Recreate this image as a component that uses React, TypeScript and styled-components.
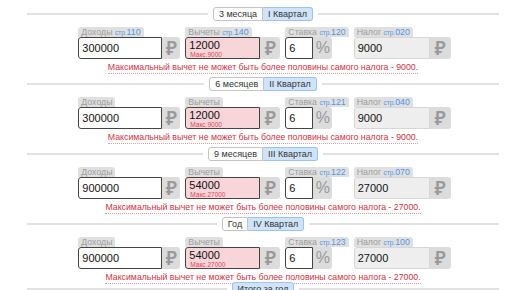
import React from 'react';
import styled, { createGlobalStyle } from 'styled-components';

const GlobalStyle = createGlobalStyle`
  html, body {
    margin: 0;
    padding: 0;
    background: #ffffff;
    font-family: "Liberation Sans", Arial, sans-serif;
  }
`;

interface FieldData {
  value?: string;
  code?: string;
}

interface SectionData {
  period: string;
  quarter: string;
  income: FieldData;
  deduction: FieldData & { max: string };
  rate: FieldData;
  tax: FieldData;
}

const sections: SectionData[] = [
  {
    period: '3 месяца',
    quarter: 'I Квартал',
    income: { value: '300000', code: '110' },
    deduction: { value: '12000', code: '140', max: '9000' },
    rate: { value: '6', code: '120' },
    tax: { value: '9000', code: '020' },
  },
  {
    period: '6 месяцев',
    quarter: 'II Квартал',
    income: { value: '300000' },
    deduction: { value: '12000', max: '9000' },
    rate: { value: '6', code: '121' },
    tax: { value: '9000', code: '040' },
  },
  {
    period: '9 месяцев',
    quarter: 'III Квартал',
    income: { value: '900000' },
    deduction: { value: '54000', max: '27000' },
    rate: { value: '6', code: '122' },
    tax: { value: '27000', code: '070' },
  },
  {
    period: 'Год',
    quarter: 'IV Квартал',
    income: { value: '900000' },
    deduction: { value: '54000', max: '27000' },
    rate: { value: '6', code: '123' },
    tax: { value: '27000', code: '100' },
  },
];

const StyledPage = styled.div`
  padding: 7px 12px 0 22px;
  width: 482px;
`;

const StyledSection = styled.section`
  display: flex;
  flex-direction: column;
  align-items: center;
  margin-bottom: 3px;

  &:nth-of-type(4) {
    margin-bottom: -2px;
  }
`;

const StyledHeader = styled.div`
  display: flex;
  align-items: center;
  width: 100%;
  height: 14px;
  margin-bottom: 6px;
`;

const StyledLine = styled.div`
  flex: 1;
  height: 2px;
  background: #e2e2e2;
  margin: 0 5px;
`;

const StyledTabs = styled.div`
  display: flex;
`;

const StyledTab = styled.div<{ $active?: boolean }>`
  height: 14px;
  box-sizing: border-box;
  padding: 0 5px;
  display: flex;
  align-items: center;
  font-size: 9px;
  color: #333;
  background: ${(p) => (p.$active ? '#cfe3fa' : '#ffffff')};
  border: 1px solid ${(p) => (p.$active ? '#9cc3ee' : '#c4c4c4')};
  &:first-child {
    border-radius: 3px 0 0 3px;
  }
  &:last-child {
    border-radius: 0 3px 3px 0;
  }
  &:only-child {
    border-radius: 3px;
  }
  & + & {
    border-left: none;
  }
`;

const StyledRow = styled.div`
  display: flex;
  gap: 5px;
  margin-left: 3px;
`;

const StyledField = styled.div`
  display: flex;
  flex-direction: column;
  align-items: flex-start;
`;

const StyledLabel = styled.div`
  height: 10px;
  box-sizing: border-box;
  padding: 0 3px;
  background: #e0e0e0;
  border-radius: 3px 3px 0 0;
  font-size: 8.75px;
  line-height: 10px;
  color: #9c9c9c;
  white-space: nowrap;

  small {
    font-size: 6.5px;
    color: #4f95e6;
  }
  b {
    font-weight: normal;
    color: #4f95e6;
  }
`;

const StyledGroup = styled.div`
  display: flex;
  height: 22px;
`;

const StyledInput = styled.div<{ $w: number; $variant?: 'error' | 'readonly' }>`
  position: relative;
  width: ${(p) => p.$w}px;
  height: 22px;
  box-sizing: border-box;
  padding: ${(p) => (p.$variant === 'error' ? '1px 3px 0' : '0 3px')};
  display: flex;
  align-items: ${(p) => (p.$variant === 'error' ? 'flex-start' : 'center')};
  font-size: 11px;
  line-height: 13px;
  color: #111;
  border-radius: 3px 0 0 3px;
  background: ${(p) =>
    p.$variant === 'error' ? '#f7d5d9' : p.$variant === 'readonly' ? '#eeeeee' : '#ffffff'};
  border: 1.5px solid ${(p) => (p.$variant === 'readonly' ? '#d6d6d6' : '#444')};
`;

const StyledMax = styled.span`
  position: absolute;
  left: 4px;
  bottom: 0px;
  font-size: 6.5px;
  line-height: 7px;
  color: #e0475a;
`;

const StyledAddon = styled.div<{ $w: number }>`
  width: ${(p) => p.$w}px;
  height: 22px;
  display: flex;
  align-items: center;
  justify-content: center;
  background: #dcdcdc;
  border-radius: 0 3px 3px 0;
  color: #999;
  font-family: "Noto Sans", Roboto, Inter, sans-serif;
  font-weight: 600;
  font-size: 19px;
  line-height: 1;
`;

const StyledPercent = styled(StyledAddon)`
  font-family: "Liberation Sans", Arial, sans-serif;
  font-weight: normal;
  font-size: 16px;
`;

const StyledError = styled.div`
  margin-top: 3px;
  height: 11px;
  font-size: 8.75px;
  line-height: 10px;
  color: #cc3344;
  border-bottom: 1px dotted #d9a0a8;
`;

const Label = ({ title, code }: { title: string; code?: string }) => (
  <StyledLabel>
    {title}
    {code && (
      <>
        {' '}
        <small>стр.</small>
        <b>{code}</b>
      </>
    )}
  </StyledLabel>
);

const Section = ({ data }: { data: SectionData }) => (
  <StyledSection>
    <StyledHeader>
      <StyledLine />
      <StyledTabs>
        <StyledTab>{data.period}</StyledTab>
        <StyledTab $active>{data.quarter}</StyledTab>
      </StyledTabs>
      <StyledLine />
    </StyledHeader>
    <StyledRow>
      <StyledField>
        <Label title="Доходы" code={data.income.code} />
        <StyledGroup>
          <StyledInput $w={84}>{data.income.value}</StyledInput>
          <StyledAddon $w={18}>₽</StyledAddon>
        </StyledGroup>
      </StyledField>
      <StyledField>
        <Label title="Вычеты" code={data.deduction.code} />
        <StyledGroup>
          <StyledInput $w={75} $variant="error">
            {data.deduction.value}
            <StyledMax>Макс.{data.deduction.max}</StyledMax>
          </StyledInput>
          <StyledAddon $w={20}>₽</StyledAddon>
        </StyledGroup>
      </StyledField>
      <StyledField>
        <Label title="Ставка" code={data.rate.code} />
        <StyledGroup>
          <StyledInput $w={28}>{data.rate.value}</StyledInput>
          <StyledPercent $w={19}>%</StyledPercent>
        </StyledGroup>
      </StyledField>
      <StyledField>
        <Label title="Налог" code={data.tax.code} />
        <StyledGroup>
          <StyledInput $w={76} $variant="readonly">
            {data.tax.value}
          </StyledInput>
          <StyledAddon $w={21}>₽</StyledAddon>
        </StyledGroup>
      </StyledField>
    </StyledRow>
    <StyledError>
      Максимальный вычет не может быть более половины самого налога - {data.deduction.max}.
    </StyledError>
  </StyledSection>
);

const App = () => {
  return (
    <>
      <GlobalStyle />
      <StyledPage>
        {sections.map((s) => (
          <Section key={s.quarter} data={s} />
        ))}
        <StyledHeader>
          <StyledLine />
          <StyledTabs>
            <StyledTab $active>Итого за год</StyledTab>
          </StyledTabs>
          <StyledLine />
        </StyledHeader>
      </StyledPage>
    </>
  );
};

export default App;
